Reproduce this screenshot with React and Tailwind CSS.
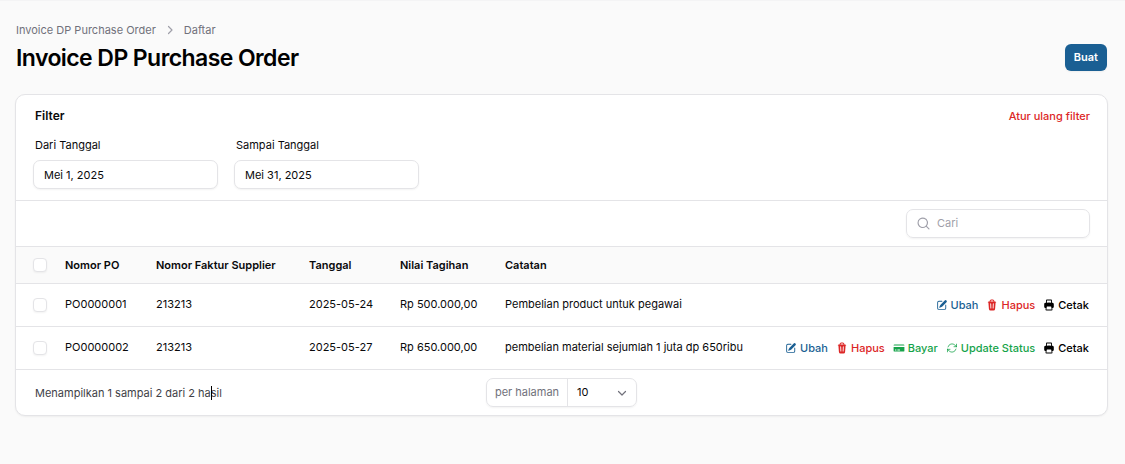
import React, { useState } from 'react';
import {
  HiMiniCreditCard,
  HiMiniMagnifyingGlass,
  HiMiniPencilSquare,
  HiMiniPrinter,
  HiMiniTrash,
  HiOutlineArrowPath,
} from 'react-icons/hi2';

const ACTIONS = {
  ubah: { label: 'Ubah', icon: HiMiniPencilSquare, color: 'text-[#1a5f93]' },
  hapus: { label: 'Hapus', icon: HiMiniTrash, color: 'text-[#dc2626]' },
  bayar: { label: 'Bayar', icon: HiMiniCreditCard, color: 'text-[#16a34a]' },
  status: { label: 'Update Status', icon: HiOutlineArrowPath, color: 'text-[#16a34a]' },
  cetak: { label: 'Cetak', icon: HiMiniPrinter, color: 'text-black' },
};

const ORDERS = [
  {
    nomor: 'PO0000001',
    faktur: '213213',
    tanggal: '2025-05-24',
    nilai: 'Rp 500.000,00',
    catatan: 'Pembelian product untuk pegawai',
    actions: ['ubah', 'hapus', 'cetak'],
  },
  {
    nomor: 'PO0000002',
    faktur: '213213',
    tanggal: '2025-05-27',
    nilai: 'Rp 650.000,00',
    catatan: 'pembelian material sejumlah 1 juta dp 650ribu',
    actions: ['ubah', 'hapus', 'bayar', 'status', 'cetak'],
  },
];

function Checkbox({ label, checked, onChange }) {
  return (
    <input
      type="checkbox"
      aria-label={label}
      checked={checked}
      onChange={onChange}
      className="block size-[14px] appearance-none rounded border border-zinc-200 bg-white shadow-xs checked:border-[#1a5f93] checked:bg-[#1a5f93]"
    />
  );
}

function DateField({ id, label, value }) {
  const [date, setDate] = useState(value);

  return (
    <div className="flex w-[185px] min-w-0 flex-col gap-[7px]">
      <label htmlFor={id} className="pl-0.5 text-[11px] leading-4 text-zinc-950">
        {label}
      </label>
      <input
        id={id}
        type="text"
        value={date}
        onChange={(e) => setDate(e.target.value)}
        className="h-[29px] w-full rounded-[7px] border border-zinc-200 bg-white px-[10px] text-[11px] text-zinc-950 shadow-xs outline-none focus:border-[#1a5f93]"
      />
    </div>
  );
}

function RowAction({ name }) {
  const { label, icon: Icon, color } = ACTIONS[name];

  return (
    <button type="button" className={`flex items-center gap-[3px] text-[11px] leading-4 font-medium ${color}`}>
      <Icon className="size-3" />
      {label}
    </button>
  );
}

export default function App() {
  const [selected, setSelected] = useState([]);
  const allSelected = selected.length === ORDERS.length;

  const toggle = (nomor) => {
    setSelected((prev) => (prev.includes(nomor) ? prev.filter((n) => n !== nomor) : [...prev, nomor]));
  };

  return (
    <div className="min-h-screen bg-zinc-50 font-['Inter',sans-serif] text-zinc-950">
      {/* Tepi bawah topbar */}
      <div className="h-px bg-zinc-100" />

      <main className="pt-[21px] pr-[17px] pb-12 pl-[15px]">
        {/* Judul halaman */}
        <header className="flex items-end justify-between pr-px pl-px">
          <div>
            <nav aria-label="Breadcrumb" className="flex items-center gap-2 text-[11px] leading-4 text-zinc-500">
              <a href="#invoice">Invoice DP Purchase Order</a>
              <svg viewBox="0 0 12 12" className="size-3 text-zinc-400" fill="none" stroke="currentColor" strokeWidth="1.2" strokeLinecap="round" strokeLinejoin="round">
                <path d="M4.5 2.5 8 6 4.5 9.5" />
              </svg>
              <a href="#daftar">Daftar</a>
            </nav>
            <h1 className="mt-1 text-[23px] leading-8 font-semibold tracking-tight text-black">Invoice DP Purchase Order</h1>
          </div>
          <button type="button" className="mb-[3px] rounded-md bg-[#1a5f93] px-[9px] py-[5px] text-[11px] leading-[17px] font-semibold text-white shadow-xs">
            Buat
          </button>
        </header>

        <section className="mt-5 overflow-hidden rounded-[10px] border border-zinc-200 bg-white shadow-xs">
          {/* Filter */}
          <div className="px-[17px] pt-3 pb-[11px]">
            <div className="flex items-center justify-between">
              <h2 className="pl-0.5 text-xs leading-[18px] font-semibold">Filter</h2>
              <button type="button" className="text-[11px] leading-4 font-medium text-[#dc2626]">
                Atur ulang filter
              </button>
            </div>
            <div className="mt-3 flex flex-wrap gap-4">
              <DateField id="dari-tanggal" label="Dari Tanggal" value="Mei 1, 2025" />
              <DateField id="sampai-tanggal" label="Sampai Tanggal" value="Mei 31, 2025" />
            </div>
          </div>

          {/* Pencarian */}
          <div className="flex justify-end border-y border-zinc-200 py-2 pr-[17px]">
            <label className="flex h-[29px] w-[184px] items-center gap-1.5 rounded-[7px] border border-zinc-200 px-[9px] shadow-xs">
              <HiMiniMagnifyingGlass className="size-[15px] shrink-0 text-zinc-400" />
              <input
                type="search"
                aria-label="Cari"
                placeholder="Cari"
                className="w-full min-w-0 bg-transparent text-[11px] outline-none placeholder:text-zinc-400"
              />
            </label>
          </div>

          <table className="w-full border-separate border-spacing-0 text-left text-[11px] leading-4 whitespace-nowrap">
            <thead className="bg-zinc-50">
              <tr className="h-9">
                <th className="w-[39px] pl-[17px]">
                  <Checkbox
                    label="Pilih semua"
                    checked={allSelected}
                    onChange={() => setSelected(allSelected ? [] : ORDERS.map((o) => o.nomor))}
                  />
                </th>
                <th className="w-[91px] px-[10px] font-semibold">Nomor PO</th>
                <th className="w-[153px] px-[10px] font-semibold">Nomor Faktur Supplier</th>
                <th className="w-[91px] px-[10px] font-semibold">Tanggal</th>
                <th className="w-[105px] px-[10px] font-semibold">Nilai Tagihan</th>
                <th className="px-[10px] font-semibold">Catatan</th>
                <th aria-label="Aksi" />
              </tr>
            </thead>
            <tbody>
              {ORDERS.map((order) => (
                <tr key={order.nomor} className="h-[43px] [&>td]:border-t [&>td]:border-zinc-200">
                  <td className="pl-[17px]">
                    <Checkbox
                      label={`Pilih ${order.nomor}`}
                      checked={selected.includes(order.nomor)}
                      onChange={() => toggle(order.nomor)}
                    />
                  </td>
                  <td className="px-[10px] pb-0.5">{order.nomor}</td>
                  <td className="px-[10px] pb-0.5">{order.faktur}</td>
                  <td className="px-[10px] pb-0.5">{order.tanggal}</td>
                  <td className="px-[10px] pb-0.5">{order.nilai}</td>
                  <td className="px-[10px] pb-0.5">{order.catatan}</td>
                  <td className="pr-[18px]">
                    <div className="flex items-center justify-end gap-2">
                      {order.actions.map((name) => (
                        <RowAction key={name} name={name} />
                      ))}
                    </div>
                  </td>
                </tr>
              ))}
            </tbody>
          </table>

          {/* Paginasi */}
          <footer className="grid grid-cols-[1fr_auto_1fr] items-center border-t border-zinc-200 px-[19px] py-2">
            <p className="text-[11px] leading-4 text-zinc-700">
              Menampilkan 1 sampai 2 dari 2 ha
              <span className="relative">
                <span className="absolute inset-y-0 left-0 w-px bg-black" />
                sil
              </span>
            </p>
            <div className="flex h-[29px] items-center rounded-[7px] border border-zinc-200 text-[11px] shadow-xs">
              <label htmlFor="per-halaman" className="flex h-full items-center border-r border-zinc-200 px-2 text-zinc-500">
                per halaman
              </label>
              <div className="relative h-full">
                <select id="per-halaman" defaultValue="10" className="h-full w-[68px] appearance-none bg-transparent pl-[9px] outline-none">
                  <option>5</option>
                  <option>10</option>
                  <option>25</option>
                  <option>50</option>
                </select>
                <svg viewBox="0 0 12 12" className="pointer-events-none absolute top-2 right-2 size-3 text-zinc-500" fill="none" stroke="currentColor" strokeWidth="1.2" strokeLinecap="round" strokeLinejoin="round">
                  <path d="M2.5 4.5 6 8 9.5 4.5" />
                </svg>
              </div>
            </div>
          </footer>
        </section>
      </main>
    </div>
  );
}
